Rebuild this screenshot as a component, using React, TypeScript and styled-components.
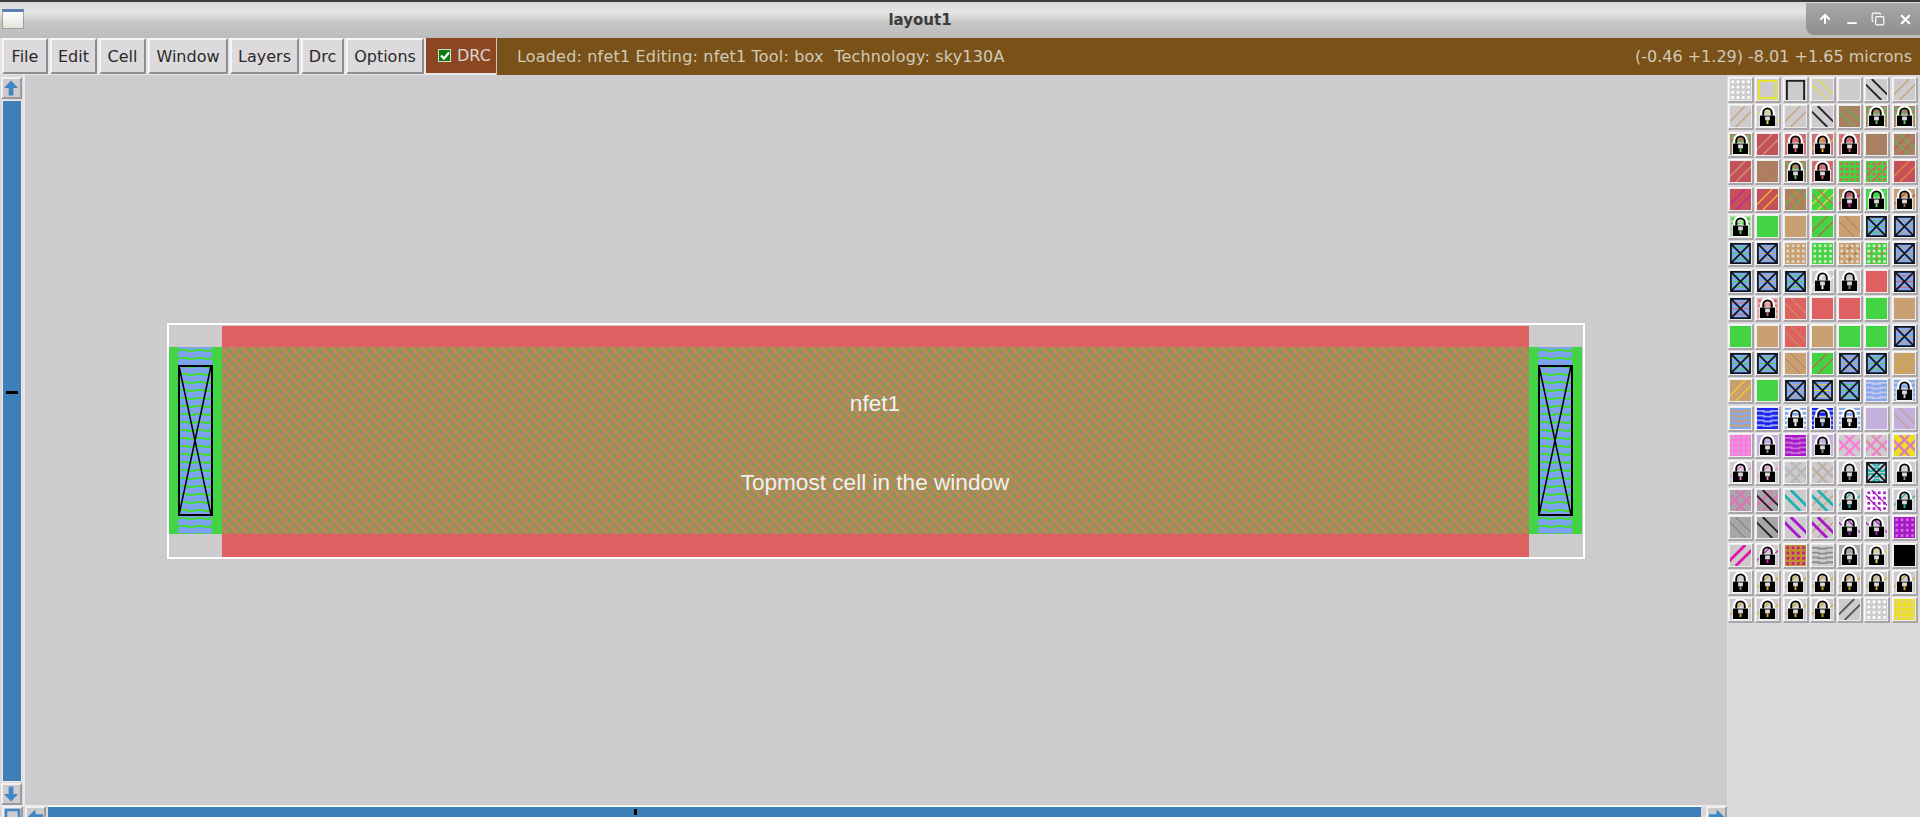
import React from 'react'
import styled, { createGlobalStyle } from 'styled-components'
import { ArrowUp, Minus, Copy, X } from 'lucide-react'

const GlobalStyle = createGlobalStyle`
  html, body { margin: 0; padding: 0; height: 100%; overflow: hidden; background: #cdcbce; }
  #root { width: 1920px; height: 817px; }
`

const Page = styled.div`
  width: 1920px;
  height: 817px;
  display: flex;
  flex-direction: column;
  overflow: hidden;
  font-family: 'DejaVu Sans', sans-serif;
  background: #cdcbce;
`

const TitleBar = styled.div`
  position: relative;
  height: 38px;
  flex: none;
  display: flex;
  align-items: center;
  justify-content: center;
  box-sizing: border-box;
  border-top: 2px solid #3a3a3a;
  background: linear-gradient(#d8d8d8, #e6e6e6 30%, #c6c6c6 55%, #bcbcbc);
  font-size: 15px;
  font-weight: 700;
  color: #3c3c3c;
  padding-right: 80px;
`

const AppIcon = styled.div`
  position: absolute;
  left: 2px;
  top: 7px;
  width: 22px;
  height: 20px;
  box-sizing: border-box;
  border: 1px solid #a0a0a0;
  border-top: 3px solid #5a7db8;
  background: linear-gradient(#fff, #e4e4da);
`

const WindowControls = styled.div`
  position: absolute;
  right: 0;
  top: 1px;
  width: 114px;
  height: 32px;
  display: flex;
  align-items: center;
  justify-content: space-between;
  padding: 0 7px 0 12px;
  box-sizing: border-box;
  border-bottom-left-radius: 8px;
  background: linear-gradient(#a8a8a8, #8e8e8e);
  color: #fff;
  svg:nth-child(2) { transform: translateY(4px); }
`

const MenuRow = styled.div`
  height: 37px;
  flex: none;
  display: flex;
  align-items: stretch;
  padding-left: 2px;
  gap: 1px;
  background: #e6e5e7;
`

const MenuButton = styled.div<{ $w: number }>`
  width: ${(p) => p.$w}px;
  height: 36px;
  box-sizing: border-box;
  display: flex;
  align-items: center;
  justify-content: center;
  margin-right: 1px;
  background: #dcdadd;
  border: 2px solid;
  border-color: #f6f6f6 #8f8d90 #8f8d90 #f6f6f6;
  font-size: 16px;
  color: #2a2a2a;
`

const DrcBox = styled.div`
  width: 70px;
  height: 35px;
  box-sizing: border-box;
  display: flex;
  align-items: center;
  gap: 6px;
  padding-left: 12px;
  background: #8b4722;
  color: #ddd6cf;
  font-size: 16px;
`

const Check = styled.div`
  width: 13px;
  height: 13px;
  box-sizing: border-box;
  display: flex;
  align-items: center;
  justify-content: center;
  background: #0c7d0c;
  border: 1px solid #d8d8d8;
`

const StatusBar = styled.div`
  flex: 1;
  height: 37px;
  margin-left: -1px;
  display: flex;
  align-items: center;
  justify-content: space-between;
  padding: 0 8px 0 20px;
  background: #7a5118;
  border-left: 1px solid #c8c4bc;
  color: #cfcbb8;
  font-size: 16px;
  white-space: pre;
`

const StatusText = styled.span`
  letter-spacing: 0.18px;
`

const Body = styled.div`
  flex: 1;
  min-height: 0;
  display: flex;
`

const Main = styled.div`
  flex: 1;
  min-width: 0;
  display: flex;
  flex-direction: column;
`

const MainRow = styled.div`
  flex: 1;
  min-height: 0;
  display: flex;
`

const VScroll = styled.div`
  width: 25px;
  flex: none;
  display: flex;
  flex-direction: column;
  align-items: center;
  gap: 1px;
  padding: 2px 0 0 0;
  box-sizing: border-box;
  background: #d9d7da;
  border-right: 2px solid #ebeaec;
`

const ArrowButton = styled.div`
  width: 21px;
  height: 22px;
  flex: none;
  box-sizing: border-box;
  background: #cdcbce;
  border: 2px solid;
  border-color: #f0f0f0 #9c9a9d #9c9a9d #f0f0f0;
  display: flex;
  align-items: center;
  justify-content: center;
`

const VThumb = styled.div`
  position: relative;
  flex: 1;
  width: 20px;
  background: #3f7fb8;
  border: 1px solid #ecebed;
  box-sizing: border-box;
`

const Tick = styled.div`
  position: absolute;
  left: 3px;
  top: 290px;
  width: 12px;
  height: 3px;
  background: #000;
`

const Canvas = styled.div`
  position: relative;
  flex: 1;
  min-width: 0;
  background: #cdcbce;
`

const CellBox = styled.svg`
  position: absolute;
  left: 142px;
  top: 248px;
  shape-rendering: crispEdges;
`

const CellLabel = styled.div<{ $top: number }>`
  position: absolute;
  left: 0;
  width: 1700px;
  top: ${(p) => p.$top}px;
  text-align: center;
  font-family: 'Liberation Sans', Arial, sans-serif;
  font-size: 22.6px;
  line-height: 26px;
  color: #f2f0f0;
`

const HScroll = styled.div`
  height: 11px;
  flex: none;
  display: flex;
  overflow: hidden;
  background: #d9d7da;
  border-top: 1px solid #ebeaec;
`

const HThumb = styled.div`
  flex: 1;
  height: 14px;
  position: relative;
  background: #3f7fb8;
  border-top: 1px solid #fff;
  box-sizing: border-box;
  margin: 0 3px 0 2px;
`

const HTick = styled.div`
  position: absolute;
  left: 586px;
  top: 2px;
  width: 3px;
  height: 6px;
  background: #000;
`

const CornerButton = styled.div`
  width: 21px;
  height: 22px;
  flex: none;
  box-sizing: border-box;
  margin-left: 2px;
  background: #cdcbce;
  border: 2px solid;
  border-color: #f0f0f0 #9c9a9d #9c9a9d #f0f0f0;
  overflow: hidden;
  svg { display: block; }
`

const LayerPanel = styled.div`
  width: 193px;
  flex: none;
  box-sizing: border-box;
  padding: 2px 0 0 1px;
  background: #dcdadc;
  display: grid;
  grid-template-columns: repeat(7, 27.3px);
  grid-auto-rows: 27.4px;
  align-content: start;
`

const Swatch = styled.div`
  width: 26px;
  height: 26px;
  box-sizing: border-box;
  padding: 1px;
  background: #ececec;
  border-style: solid;
  border-width: 1px 2px 2px 1px;
  border-color: #f8f8f8 #a8a6a9 #a8a6a9 #f8f8f8;
  overflow: hidden;
  svg { display: block; }
`

const GRAY = '#cdcbce'
const RED = '#de6060'
const GREEN = '#42d442'
const TAN = '#c9a072'
const BROWN = '#a98162'
const BLUE = '#84a8ee'
const LILAC = '#c4b0dc'
const PINK = '#fb7bd8'

// one entry per layer: b=background, d=diagonals (/), n=diagonals (\), w=their width, x=lattice, dots, wave, c=contact, lock, box
type Layer = {
  b?: string
  d?: string
  n?: string
  w?: number
  x?: string
  dots?: string
  wave?: string
  c?: string
  lock?: boolean
  box?: string
}

const tanDiag: Layer = { d: TAN }
const blackDiag: Layer = { n: '#222', w: 2 }
const lockG: Layer = { d: '#d0a828', lock: true }
const contact = (c: string): Layer => ({ b: BLUE, c })

const layers: Layer[] = [
  // 1
  { dots: '#fff' }, { box: '#e8e820' }, { box: '#222' }, { n: '#e8e040' }, {}, blackDiag, tanDiag,
  // 2
  tanDiag, { n: '#e8e040', lock: true }, tanDiag, blackDiag, { b: BROWN, n: '#5fb84f' }, { b: BROWN, dots: '#60c060', lock: true }, { b: BROWN, dots: '#60c060', lock: true },
  // 3
  { b: BROWN, dots: '#60c060', lock: true }, { b: '#c4505a', d: TAN }, { b: '#c9777a', dots: RED, lock: true }, { b: '#c9777a', d: '#f0c030', lock: true }, { b: '#c9777a', dots: RED, lock: true }, { b: BROWN }, { b: BROWN, d: '#c85a5a', n: '#5fb84f' },
  // 4
  { b: '#c4505a', d: TAN }, { b: BROWN, d: '#c07060' }, { b: BROWN, dots: '#60c060', lock: true }, { b: '#c9777a', dots: RED, lock: true }, { b: GREEN, dots: RED }, { b: GREEN, dots: RED, d: RED }, { b: '#c4505a', d: '#e89030' },
  // 5
  { b: '#c4505a', d: '#d020a0' }, { b: '#c4505a', d: '#f0c020' }, { b: BROWN, d: '#5fb84f', n: '#d08040' }, { b: GREEN, d: '#e8e040', n: '#e06060' }, { b: BROWN, d: '#d020a0', lock: true }, { b: GREEN, dots: '#60e060', lock: true }, { b: TAN, d: '#a06040', lock: true },
  // 6
  { b: '#b8dcb0', dots: GREEN, lock: true }, { b: GREEN }, { b: TAN }, { b: GREEN, d: '#c86050' }, { b: TAN, n: '#b88868' }, contact(GREEN), contact(TAN),
  // 7
  contact(GREEN), contact(TAN), { b: TAN, dots: '#e0d8c8' }, { b: GREEN, dots: '#d8e8c8' }, { b: TAN, dots: '#e0d8c8', d: '#b87060' }, { b: GREEN, dots: '#d8e8c8', d: RED }, contact(TAN),
  // 8
  contact(GREEN), contact(TAN), contact(GREEN), { d: '#fff', lock: true }, { lock: true }, { b: RED }, contact(RED),
  // 9
  contact(RED), { b: '#e8b0b0', dots: RED, lock: true }, { b: RED, n: '#c89060' }, { b: RED }, { b: RED }, { b: GREEN }, { b: TAN },
  // 10
  { b: GREEN }, { b: TAN }, { b: RED, n: '#c89060' }, { b: TAN }, { b: GREEN }, { b: GREEN }, contact(TAN),
  // 11
  contact(GREEN), contact(GREEN), { b: TAN, n: '#b88868' }, { b: GREEN, d: '#c86050' }, contact(TAN), contact(GREEN), { b: TAN, d: '#d8b020' },
  // 12
  { b: TAN, d: '#f0d020' }, { b: GREEN }, contact(TAN), contact('#f0d020'), contact(GREEN), { b: BLUE, wave: '#c8c8e8' }, { b: BLUE, wave: '#c8c8e8', lock: true },
  // 13
  { b: BLUE, wave: TAN }, { b: '#1c20f0', wave: '#98a8f0' }, { b: BLUE, wave: '#fff', lock: true }, { b: '#1c20f0', wave: BLUE, lock: true }, { b: BLUE, wave: '#fff', lock: true }, { b: LILAC }, { b: LILAC, n: '#c8a090' },
  // 14
  { b: PINK, dots: '#d8a0e0' }, { b: LILAC, lock: true }, { b: '#a818c8', wave: '#c870d8' }, { b: LILAC, lock: true }, { x: PINK }, { x: PINK, n: '#c8a080' }, { b: '#e8e020', x: '#e078c0' },
  // 15
  { d: PINK, lock: true }, { d: PINK, lock: true }, { x: '#b8b6b8' }, { x: '#b8b6b8', n: '#c8a888' }, { lock: true }, { x: '#20b0b0', c: GRAY }, { lock: true },
  // 16
  { b: '#a8a6a8', x: '#d878b8' }, { b: '#a8a6a8', x: '#d878b8', n: '#222', w: 2 }, { n: '#20b0b0', w: 3 }, { n: '#20b0b0', w: 3, d: '#c8a070' }, { d: '#20b0b0', lock: true }, { b: '#fff', dots: '#a818c8', n: '#a818c8' }, { d: '#20b0b0', lock: true },
  // 17
  { b: '#a8a6a8', n: '#8a888a' }, { b: '#a8a6a8', n: '#222', w: 2 }, { n: '#a818c8', w: 3 }, { n: '#a818c8', w: 3, d: '#c8a070' }, { n: '#a818c8', lock: true }, { n: '#a818c8', lock: true }, { b: '#a818c8', dots: '#d070e0' },
  // 18
  { d: '#e018a8', w: 3 }, { d: '#e018a8', lock: true }, { b: '#c09030', dots: '#c81890' }, { wave: '#8e8c8e' }, { b: '#a8a6a8', lock: true }, { d: '#e8e040', lock: true }, { b: '#000' },
  // 19
  { lock: true }, lockG, lockG, lockG, lockG, lockG, lockG,
  // 20
  lockG, lockG, lockG, lockG, { d: '#555', w: 2 }, { dots: '#fff' }, { b: '#e8e020', dots: '#e8d0a0' },
]

const diagLines = (color: string, up: boolean, width: number) =>
  [-6, 6].map((o) => (
    <path
      key={o + color + up}
      d={up ? `M${o} 22L${o + 22} 0` : `M${o} 0L${o + 22} 22`}
      stroke={color}
      strokeWidth={width}
      fill="none"
    />
  ))

// padlock over the swatch, white halo around a black body, keyhole takes the layer colour
const Lock = ({ key_ }: { key_: string }) => (
  <g>
    <path d="M5 10V7a6 6 0 0 1 12 0v3" fill="none" stroke="#fff" strokeWidth="3.5" />
    <rect x="2" y="9" width="18" height="13" fill="#fff" />
    <path d="M6.5 10V7a4.5 4.5 0 0 1 9 0v3" fill="none" stroke="#000" strokeWidth="2" />
    <rect x="3" y="10" width="16" height="11" fill="#000" />
    <rect x="8.5" y="11" width="5" height="4" fill="#dcd8d8" />
    <rect x="10" y="15" width="2" height="4" fill={key_} />
  </g>
)

const LayerIcon = ({ l }: { l: Layer }) => {
  const dots = []
  if (l.dots) {
    for (const y of [2.5, 8, 13.5, 19]) {
      for (const x of [2.5, 8, 13.5, 19]) {
        dots.push(<rect key={x + '-' + y} x={x - 1} y={y - 1} width="2.8" height="2.8" fill={l.dots} />)
      }
    }
  }
  const waves = l.wave
    ? [3, 8, 13, 18].map((y) => (
        <path key={y} d={`M0 ${y}h7v1h8v-1h7`} stroke={l.wave} strokeWidth="2" fill="none" />
      ))
    : null
  const width = l.w || 1.3
  return (
    <svg width="21" height="21" viewBox="0 0 22 22">
      <rect width="22" height="22" fill={l.b || GRAY} />
      {waves}
      {l.x && diagLines(l.x, true, 2.5)}
      {l.x && diagLines(l.x, false, 2.5)}
      {l.d && diagLines(l.d, true, l.n ? 1.3 : width)}
      {l.n && diagLines(l.n, false, width)}
      {dots}
      {l.box && <path d="M2 22V2h18v20" fill="none" stroke={l.box} strokeWidth="2" />}
      {l.box === '#e8e820' && <path d="M2 20h18" stroke={l.box} strokeWidth="2" />}
      {l.c && (
        <g>
          {[5, 11, 17].map((y) => (
            <path key={y} d={`M0 ${y}h22`} stroke={l.c} strokeWidth="1" />
          ))}
          <path d="M1 1h20v20h-20zM1 1L21 21M21 1L1 21" fill="none" stroke="#10141c" strokeWidth="1.8" />
        </g>
      )}
      {l.lock && <Lock key_={l.n || l.d || l.dots || l.wave || '#888'} />}
    </svg>
  )
}

const menus: [string, number][] = [
  ['File', 46], ['Edit', 47], ['Cell', 47], ['Window', 80], ['Layers', 69], ['Drc', 43], ['Options', 78],
]

const arrows = {
  up: 'M8.5 1L16 9H11V17H6V9H1Z',
  down: 'M8.5 17L16 9H11V1H6V9H1Z',
  left: 'M1 8.5L9 1V6H17V11H9V16Z',
  right: 'M17 8.5L9 1V6H1V11H9V16Z',
}

const BlueArrow = ({ dir }: { dir: keyof typeof arrows }) => (
  <svg width="17" height="18" viewBox="0 0 18 18">
    <path d={arrows[dir]} fill="#3f86c4" />
  </svg>
)

const Diffusion = ({ x }: { x: number }) => (
  <g>
    <rect x={x} y={24} width="53" height="187" fill={GREEN} />
    <rect x={x + 9} y={24} width="34" height="187" fill="url(#wavePat)" />
    <rect x={x + 9.5} y={43} width="33" height="149" fill="none" stroke="#000" strokeWidth="2" />
    <path d={`M${x + 10} 43L${x + 42} 192M${x + 42} 43L${x + 10} 192`} stroke="#000" strokeWidth="1.5" shapeRendering="auto" />
  </g>
)

const LayoutCell = () => (
  <CellBox width="1422" height="240" viewBox="0 0 1422 240">
    <defs>
      <pattern id="hatchPat" width="10" height="10" patternUnits="userSpaceOnUse">
        <rect width="10" height="10" fill="#ad8468" />
        <path d="M-2 2L2 -2M-1 11L11 -1M8 12L12 8" stroke="#62b242" strokeWidth="1.5" shapeRendering="auto" />
        <path d="M-2 8L2 12M-1 -1L11 11M8 -2L12 2" stroke="#cc8c40" strokeWidth="1.5" shapeRendering="auto" />
      </pattern>
      <pattern id="wavePat" width="16" height="8" patternUnits="userSpaceOnUse">
        <rect width="16" height="8" fill="#7ea2ee" />
        <path d="M0 3h5v1h6v-1h5" stroke="#42d442" strokeWidth="2" fill="none" />
      </pattern>
    </defs>
    <rect x="55" y="3" width="1307" height="233" fill={RED} />
    <rect x="55" y="24" width="1307" height="187" fill="url(#hatchPat)" />
    <Diffusion x={2} />
    <Diffusion x={1362} />
    <rect x="1" y="1" width="1416" height="234" fill="none" stroke="#fff" strokeWidth="2" />
  </CellBox>
)

export default function App() {
  return (
    <Page>
      <GlobalStyle />
      <TitleBar>
        <AppIcon />
        layout1
        <WindowControls>
          <ArrowUp size={14} strokeWidth={3.5} />
          <Minus size={14} strokeWidth={3} />
          <Copy size={14} strokeWidth={2} />
          <X size={15} strokeWidth={3.5} />
        </WindowControls>
      </TitleBar>
      <MenuRow>
        {menus.map(([name, w]) => (
          <MenuButton key={name} $w={w}>
            {name}
          </MenuButton>
        ))}
        <DrcBox>
          <Check>
            <svg width="10" height="9" viewBox="0 0 10 9">
              <path d="M1 4.5L4 7.5L9 1.5" stroke="#fff" strokeWidth="2.2" fill="none" />
            </svg>
          </Check>
          DRC
        </DrcBox>
        <StatusBar>
          <StatusText>Loaded: nfet1 Editing: nfet1 Tool: box  Technology: sky130A</StatusText>
          <span>(-0.46 +1.29) -8.01 +1.65 microns</span>
        </StatusBar>
      </MenuRow>
      <Body>
        <Main>
          <MainRow>
            <VScroll>
              <ArrowButton>
                <BlueArrow dir="up" />
              </ArrowButton>
              <VThumb>
                <Tick />
              </VThumb>
              <ArrowButton>
                <BlueArrow dir="down" />
              </ArrowButton>
            </VScroll>
            <Canvas>
              <LayoutCell />
              <CellLabel $top={316}>nfet1</CellLabel>
              <CellLabel $top={395}>Topmost cell in the window</CellLabel>
            </Canvas>
          </MainRow>
          <HScroll>
            <CornerButton>
              <svg width="17" height="18" viewBox="0 0 17 18">
                <rect x="2" y="2" width="13" height="13" fill="none" stroke="#3f86c4" strokeWidth="2.5" />
              </svg>
            </CornerButton>
            <CornerButton>
              <BlueArrow dir="left" />
            </CornerButton>
            <HThumb>
              <HTick />
            </HThumb>
            <CornerButton>
              <BlueArrow dir="right" />
            </CornerButton>
          </HScroll>
        </Main>
        <LayerPanel>
          {layers.map((l, i) => (
            <Swatch key={i}>
              <LayerIcon l={l} />
            </Swatch>
          ))}
        </LayerPanel>
      </Body>
    </Page>
  )
}
